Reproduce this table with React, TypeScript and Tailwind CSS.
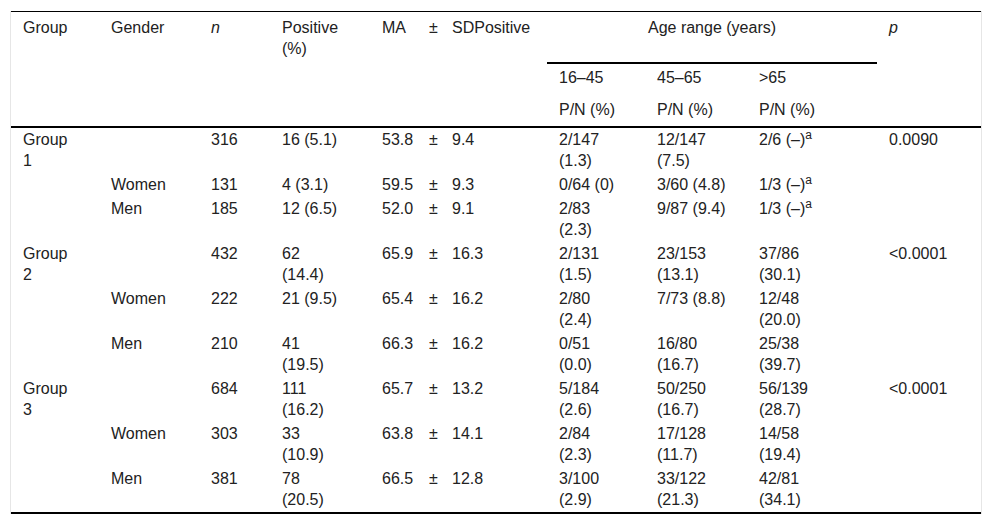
const rows: string[][] = [
  ["Group\n1", "", "316", "16 (5.1)", "53.8", "±", "9.4", "2/147\n(1.3)", "12/147\n(7.5)", "2/6 (–)^a", "0.0090"],
  ["", "Women", "131", "4 (3.1)", "59.5", "±", "9.3", "0/64 (0)", "3/60 (4.8)", "1/3 (–)^a", ""],
  ["", "Men", "185", "12 (6.5)", "52.0", "±", "9.1", "2/83\n(2.3)", "9/87 (9.4)", "1/3 (–)^a", ""],
  ["Group\n2", "", "432", "62\n(14.4)", "65.9", "±", "16.3", "2/131\n(1.5)", "23/153\n(13.1)", "37/86\n(30.1)", "<0.0001"],
  ["", "Women", "222", "21 (9.5)", "65.4", "±", "16.2", "2/80\n(2.4)", "7/73 (8.8)", "12/48\n(20.0)", ""],
  ["", "Men", "210", "41\n(19.5)", "66.3", "±", "16.2", "0/51\n(0.0)", "16/80\n(16.7)", "25/38\n(39.7)", ""],
  ["Group\n3", "", "684", "111\n(16.2)", "65.7", "±", "13.2", "5/184\n(2.6)", "50/250\n(16.7)", "56/139\n(28.7)", "<0.0001"],
  ["", "Women", "303", "33\n(10.9)", "63.8", "±", "14.1", "2/84\n(2.3)", "17/128\n(11.7)", "14/58\n(19.4)", ""],
  ["", "Men", "381", "78\n(20.5)", "66.5", "±", "12.8", "3/100\n(2.9)", "33/122\n(21.3)", "42/81\n(34.1)", ""],
];

const widths = [88, 100, 71, 100, 47, 23, 107, 98, 102, 130, 104];

function Cell({ text }: { text: string }) {
  if (text.endsWith("^a")) {
    return (
      <>
        {text.slice(0, -2)}
        <sup className="text-[12px]">a</sup>
      </>
    );
  }
  return <>{text}</>;
}

export default function App() {
  const th = "pl-[12px] pt-[5px] text-left align-top font-normal border-b-2 border-black";
  const sub = "pl-[12px] pt-[3px] text-left align-top font-normal";
  return (
    <div className="bg-white min-h-[524px] pt-[11px] font-['Liberation_Sans',Arial,sans-serif] text-[16px] leading-[21px] text-[#222]">
      <div className="ml-[10px] w-[972px] border-x border-[#e6e6e6]">
        <table className="w-[970px] table-fixed border-separate border-spacing-0 border-t border-black">
          <colgroup>
            {widths.map((w, i) => (
              <col key={i} style={{ width: w }} />
            ))}
          </colgroup>
          <thead>
            <tr className="h-[52px]">
              <th rowSpan={3} className={th}>Group</th>
              <th rowSpan={3} className={th}>Gender</th>
              <th rowSpan={3} className={th}>
                <i>n</i>
              </th>
              <th rowSpan={3} className={th}>
                Positive
                <br />
                (%)
              </th>
              <th rowSpan={3} className={th}>MA</th>
              <th rowSpan={3} className={th}>±</th>
              <th rowSpan={3} className={th}>SDPositive</th>
              <th colSpan={3} className="pt-[5px] text-center align-top font-normal border-b-2 border-black">
                Age range (years)
              </th>
              <th rowSpan={3} className={th}>
                <i>p</i>
              </th>
            </tr>
            <tr className="h-[32px]">
              <th className={sub}>16–45</th>
              <th className={sub}>45–65</th>
              <th className={sub}>&gt;65</th>
            </tr>
            <tr className="h-[32px]">
              <th className={sub + " border-b-2 border-black"}>P/N (%)</th>
              <th className={sub + " border-b-2 border-black"}>P/N (%)</th>
              <th className={sub + " border-b-2 border-black"}>P/N (%)</th>
            </tr>
          </thead>
          <tbody>
            {rows.map((r, ri) => (
              <tr key={ri}>
                {r.map((c, ci) => (
                  <td
                    key={ci}
                    className={
                      "pl-[12px] pt-[1px] pb-[2px] align-top whitespace-pre-line " +
                      (ri === rows.length - 1 ? "border-b-2 border-black" : "")
                    }
                  >
                    <Cell text={c} />
                  </td>
                ))}
              </tr>
            ))}
          </tbody>
        </table>
      </div>
    </div>
  );
}
